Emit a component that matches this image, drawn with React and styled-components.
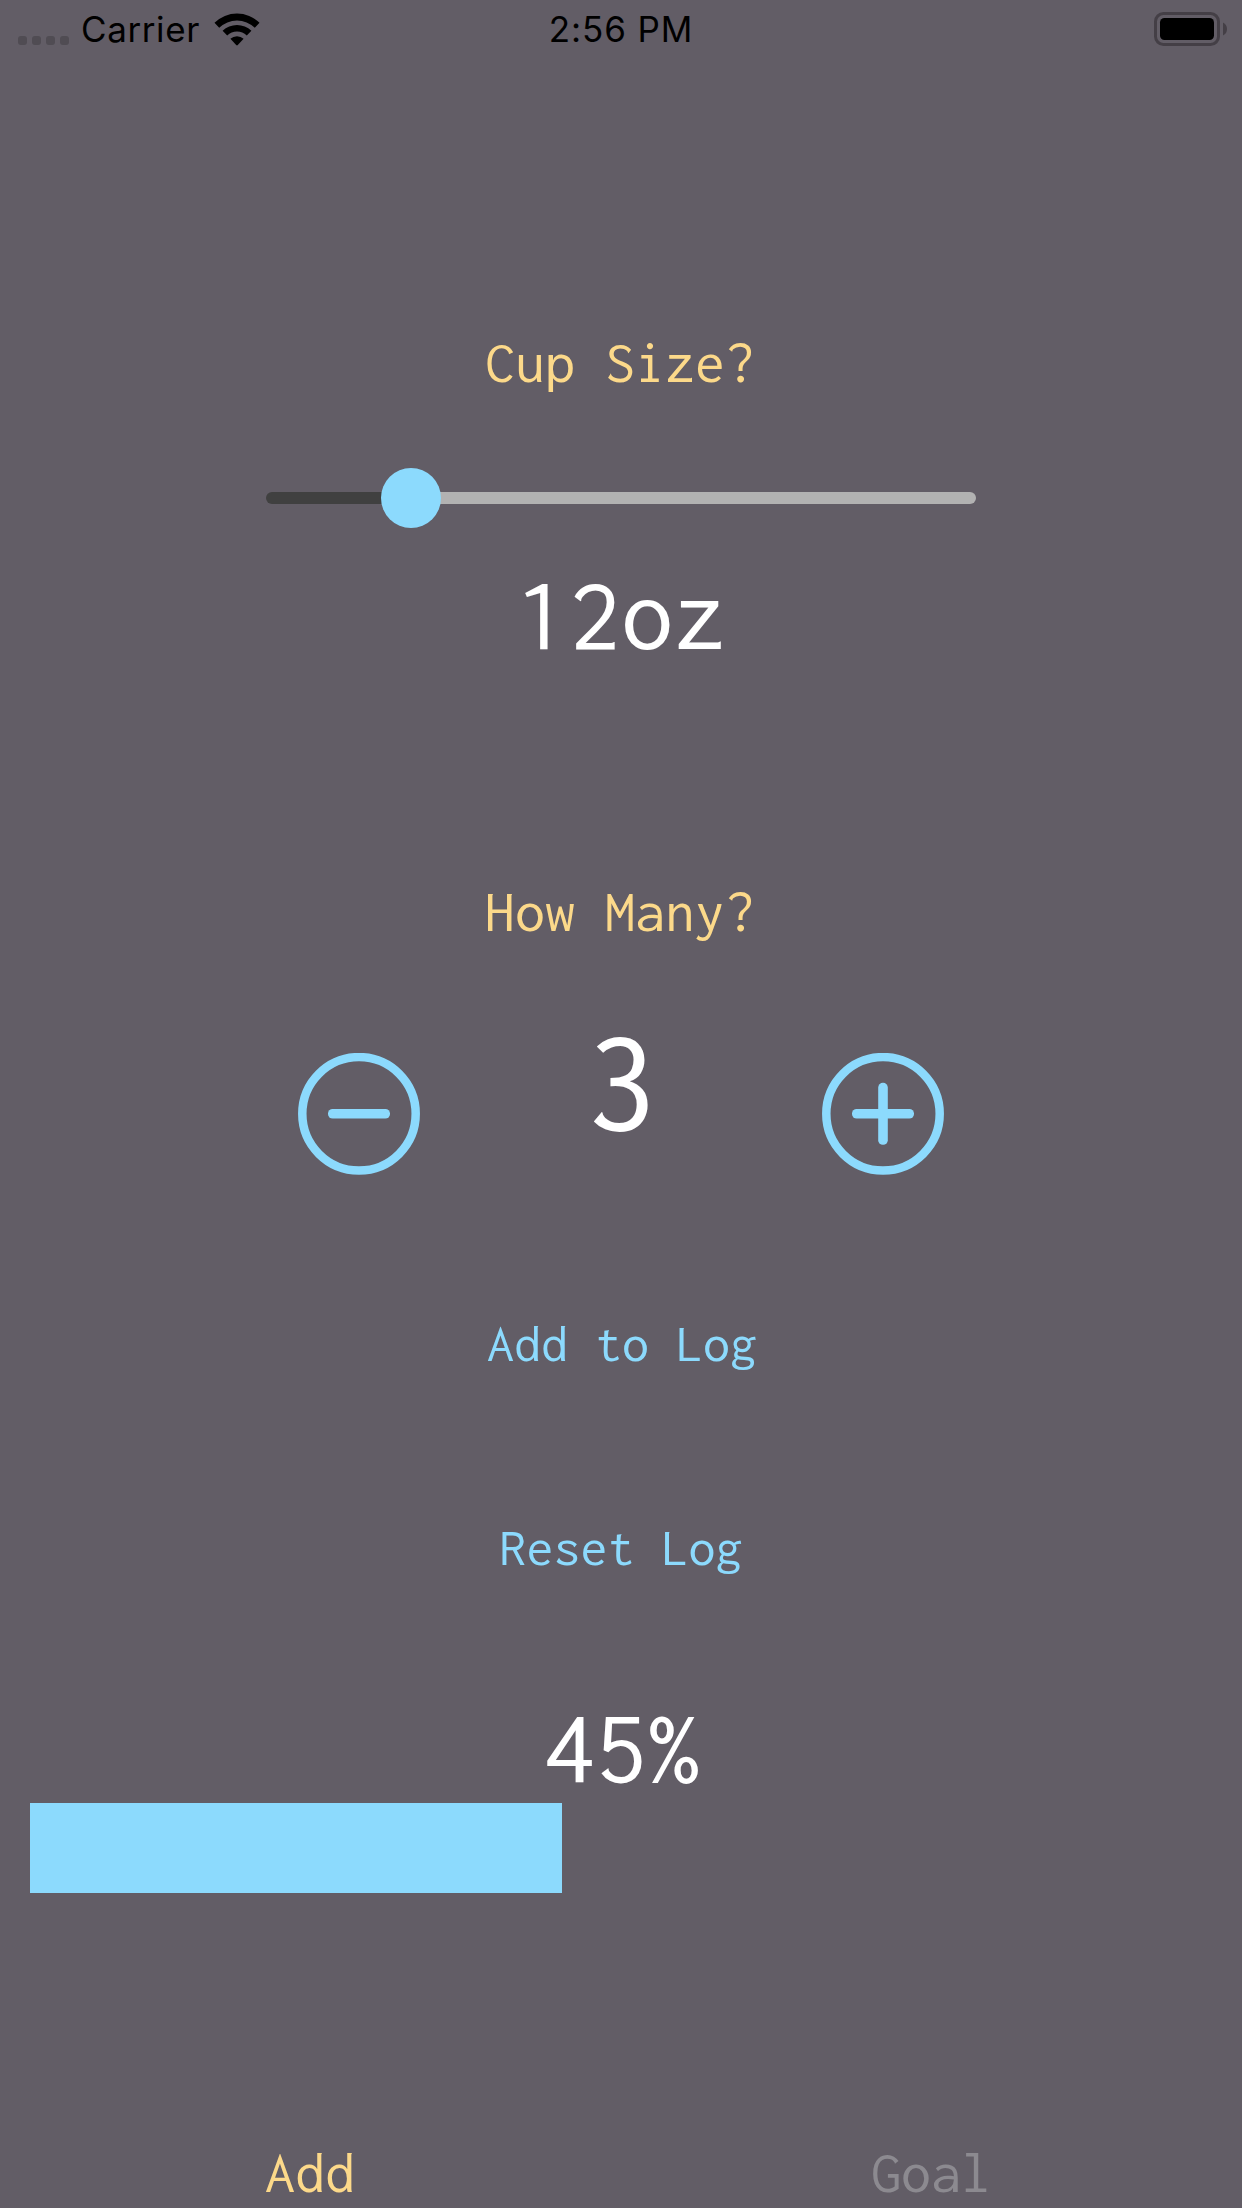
import React, { useState } from "react";
import styled, { createGlobalStyle } from "styled-components";

const colors = {
  background: "#625d66",
  accent: "#8cdafd",
  heading: "#fcd98a",
  muted: "#8c8a90",
  trackDone: "#404040",
  trackRest: "#b2b2b2",
};

const GlobalStyle = createGlobalStyle`
  * { box-sizing: border-box; }
  body { margin: 0; background: ${colors.background}; }
  button { appearance: none; border: 0; padding: 0; background: none; cursor: pointer; }
`;

const Screen = styled.div`
  display: flex;
  flex-direction: column;
  width: 1242px;
  height: 2208px;
  overflow: hidden;
  background: ${colors.background};
  font-family: Inconsolata, "DejaVu Sans Mono", monospace;
`;

const StatusBar = styled.header`
  display: grid;
  grid-template-columns: 1fr auto 1fr;
  align-items: start;
  height: 60px;
  padding: 12px 14px 0;
  font-family: Inter, "Liberation Sans", sans-serif;
  font-size: 35px;
  line-height: 35px;
  color: #000;
`;

const StatusLeft = styled.div`
  display: flex;
  align-items: flex-start;
  padding-left: 4px;
`;

const Signal = styled.div`
  display: flex;
  gap: 5px;
  padding-top: 24px;
`;

const Dot = styled.span`
  width: 9px;
  height: 9px;
  border-radius: 3px;
  background: #504c53;
`;

const Carrier = styled.span`
  margin-left: 12px;
  letter-spacing: 0.6px;
`;

const WifiIcon = styled.svg`
  width: 46px;
  height: 34px;
  margin: 1px 0 0 14px;
`;

const Time = styled.span`
  letter-spacing: 0.9px;
`;

const Battery = styled.svg`
  justify-self: end;
  width: 74px;
  height: 34px;
`;

const Content = styled.main`
  display: flex;
  flex: 1;
  flex-direction: column;
  align-items: center;
  padding-top: 272px;
`;

const Heading = styled.h2`
  margin: 0;
  padding-right: 2px;
  font-size: 60px;
  font-weight: 400;
  line-height: 60px;
  color: ${colors.heading};
`;

const Value = styled.div`
  font-size: ${(p) => p.$size}px;
  line-height: ${(p) => p.$size}px;
  color: #fff;
`;

const Slider = styled.div`
  display: flex;
  align-items: center;
  width: 710px;
  height: 60px;
  margin: 76px 0 34px;
`;

const Track = styled.span`
  flex: ${(p) => (p.$done ? "0 0 116px" : "1")};
  height: 12px;
  border-radius: ${(p) => (p.$done ? "6px 0 0 6px" : "0 6px 6px 0")};
  background: ${(p) => (p.$done ? colors.trackDone : colors.trackRest)};
`;

const Thumb = styled.span`
  width: 60px;
  height: 60px;
  margin: 0 -1px;
  border-radius: 50%;
  background: ${colors.accent};
  z-index: 1;
`;

const CupSection = styled.section`
  display: flex;
  flex-direction: column;
  align-items: center;
  margin-bottom: 214px;
`;

const Stepper = styled.div`
  display: flex;
  justify-content: space-between;
  width: 646px;
  height: 170px;
  margin: 64px 0 141px;
`;

const RoundButton = styled.button`
  align-self: flex-end;
  width: 122px;
  height: 122px;
  svg { display: block; }
`;

const TextButton = styled.button`
  margin-bottom: ${(p) => p.$below}px;
  padding-left: ${(p) => p.$indent || 0}px;
  font-family: inherit;
  font-size: 54px;
  line-height: 54px;
  color: ${colors.accent};
`;

const Progress = styled.div`
  width: 1182px;
  height: 90px;
  margin-top: 3px;
`;

const ProgressFill = styled.div`
  height: 100%;
  background: ${colors.accent};
`;

const TabBar = styled.nav`
  display: grid;
  grid-template-columns: 1fr 1fr;
  height: 66px;
`;

const Tab = styled.button`
  align-self: start;
  padding-right: 1px;
  font-family: inherit;
  font-size: 60px;
  line-height: 60px;
  color: ${(p) => (p.$active ? colors.heading : colors.muted)};
`;

function CircleIcon({ plus }) {
  return (
    <svg width="122" height="122" viewBox="0 0 122 122" fill={colors.accent}>
      <circle cx="61" cy="60.8" r="56.7" fill="none" stroke={colors.accent} strokeWidth="8.5" />
      <rect x="30" y="56" width="62" height="9.6" rx="4.6" />
      {plus && <rect x="56.2" y="29.8" width="9.6" height="62" rx="4.6" />}
    </svg>
  );
}

export default function App() {
  const [count, setCount] = useState(3);
  const percent = 45;

  return (
    <>
      <GlobalStyle />
      <Screen>
        <StatusBar>
          <StatusLeft>
            <Signal>
              <Dot /><Dot /><Dot /><Dot />
            </Signal>
            <Carrier>Carrier</Carrier>
            <WifiIcon viewBox="0 0 46 34">
              <path d="M0.5 9.8 A32 32 0 0 1 45.5 9.8 L40.8 14.8 A25.4 25.4 0 0 0 5.2 14.8 Z" />
              <path d="M8.6 17.8 A20.6 20.6 0 0 1 37.4 17.8 L32.8 22.6 A14 14 0 0 0 13.2 22.6 Z" />
              <path d="M16.4 25.8 A9.6 9.6 0 0 1 29.6 25.8 L23.8 32 Q23 32.8 22.2 32 Z" />
            </WifiIcon>
          </StatusLeft>
          <Time>2:56 PM</Time>
          <Battery viewBox="0 0 74 34">
            <rect x="1.5" y="1.5" width="63" height="31" rx="8" fill="none" stroke="#443f46" strokeWidth="3" />
            <rect x="6" y="6" width="54" height="22" rx="4.5" />
            <path d="M69 10.5 Q73 12.5 73 17 Q73 21.5 69 23.5 Z" fill="#443f46" />
          </Battery>
        </StatusBar>

        <Content>
          <CupSection>
            <Heading>Cup Size?</Heading>
            <Slider>
              <Track $done />
              <Thumb />
              <Track />
            </Slider>
            <Value $size={105}>12oz</Value>
          </CupSection>

          <Heading>How Many?</Heading>
          <Stepper>
            <RoundButton aria-label="Fewer" onClick={() => setCount(Math.max(0, count - 1))}>
              <CircleIcon />
            </RoundButton>
            <Value $size={150}>{count}</Value>
            <RoundButton aria-label="More" onClick={() => setCount(count + 1)}>
              <CircleIcon plus />
            </RoundButton>
          </Stepper>

          <TextButton $below={150} $indent={2}>Add to Log</TextButton>
          <TextButton $below={121}>Reset Log</TextButton>
          <Value $size={105}>{percent}%</Value>
          <Progress>
            <ProgressFill style={{ width: `${percent}%` }} />
          </Progress>
        </Content>

        <TabBar>
          <Tab $active>Add</Tab>
          <Tab>Goal</Tab>
        </TabBar>
      </Screen>
    </>
  );
}
